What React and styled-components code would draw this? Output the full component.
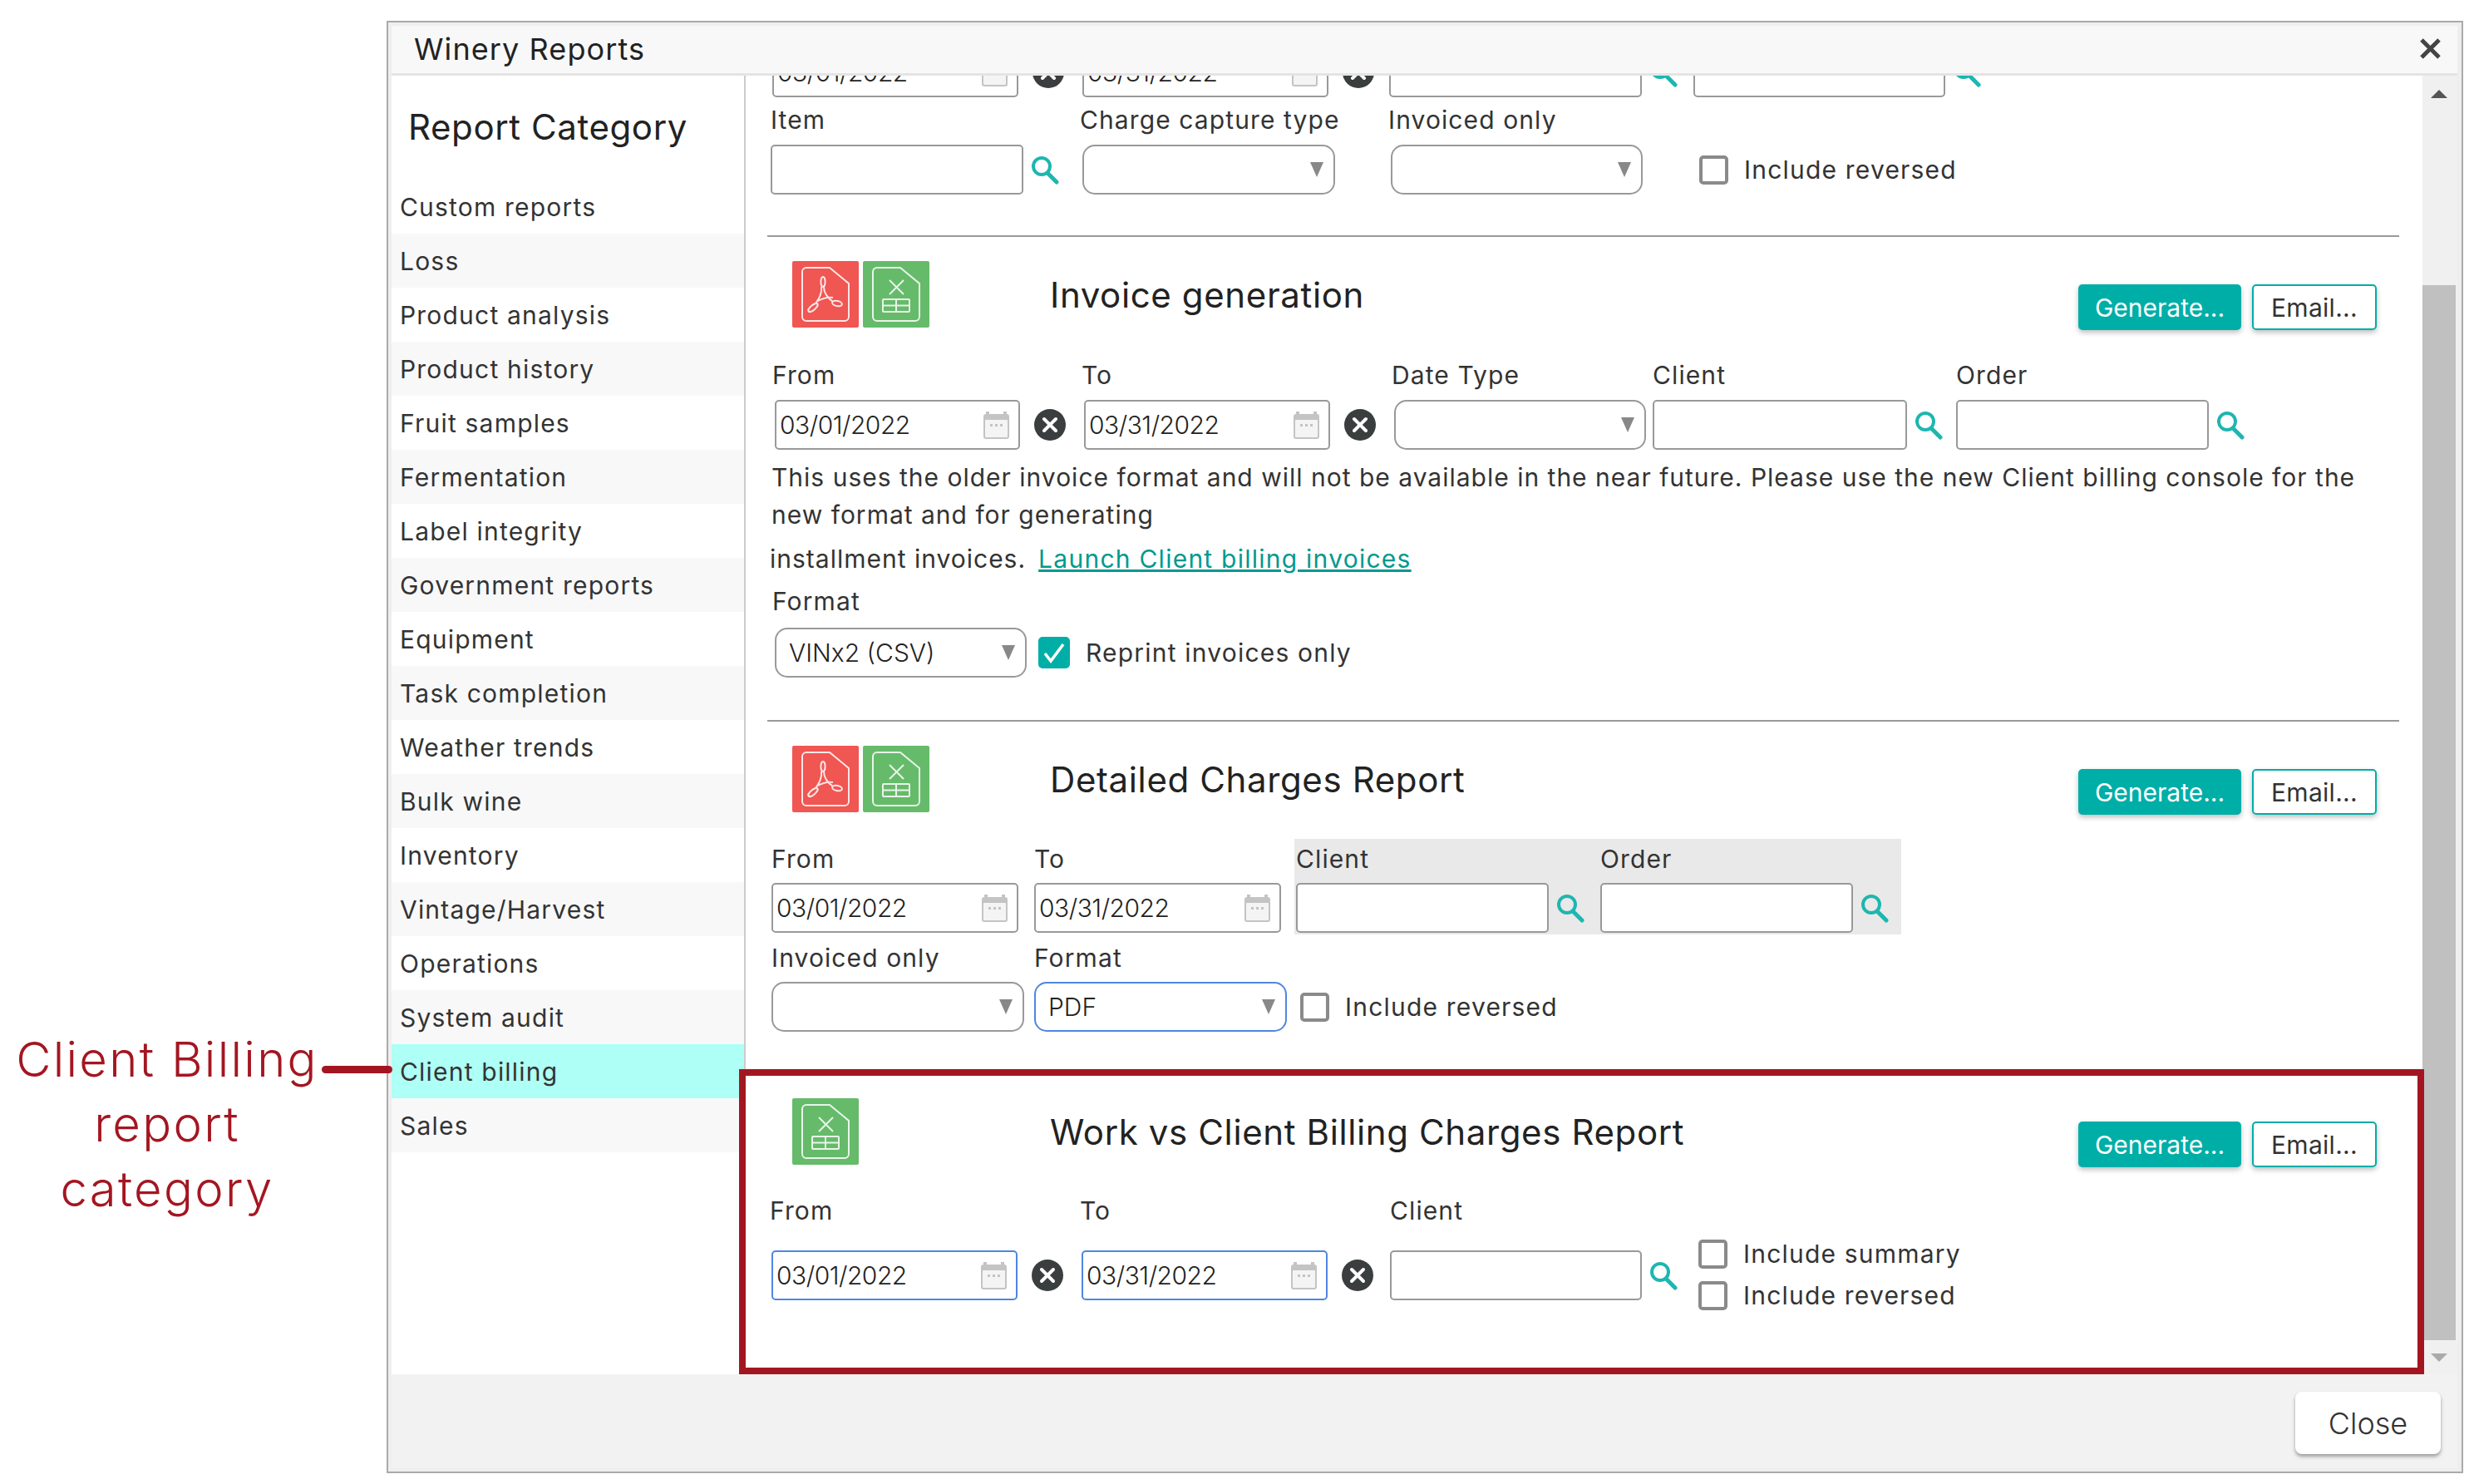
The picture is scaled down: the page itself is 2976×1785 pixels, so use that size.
import React from "react";
import styled, { createGlobalStyle } from "styled-components";

const GlobalStyle = createGlobalStyle`
  html, body { margin: 0; padding: 0; background: #fff; }
  body { font-family: Inter, "Liberation Sans", sans-serif; color: #333; }
`;

const Page = styled.div`
  display: flex;
  width: 2976px;
  height: 1785px;
  overflow: hidden;
  background: #fff;
`;

const CalloutColumn = styled.div`
  width: 465px;
  flex: none;
  position: relative;
  z-index: 2;
`;

const Callout = styled.div`
  position: relative;
  width: 402px;
  margin-top: 1235px;
  text-align: center;
  color: #a31621;
  font-size: 58px;
  line-height: 78px;
  letter-spacing: 2.3px;
  font-weight: 300;
`;

const Connector = styled.div`
  position: absolute;
  left: 387px;
  top: 47px;
  width: 85px;
  height: 9px;
  border-radius: 5px;
  background: #a31621;
`;

const Modal = styled.div`
  width: 2498px;
  height: 1747px;
  margin-top: 25px;
  flex: none;
  box-sizing: border-box;
  display: flex;
  flex-direction: column;
  border: 2px solid #aaa;
  padding: 4px 5px 4px 4px;
  background: #eee;
`;

const Header = styled.div`
  height: 60px;
  flex: none;
  display: flex;
  align-items: center;
  justify-content: space-between;
  box-sizing: border-box;
  padding: 0 20px 2px 27px;
  background: #f8f8f8;
  border-bottom: 3px solid #e4e4e4;
  font-size: 36px;
  letter-spacing: 1.1px;
  color: #222;
`;

const Body = styled.div`
  flex: 1;
  min-height: 0;
  display: flex;
  background: #fff;
`;

const Sidebar = styled.div`
  width: 426px;
  flex: none;
  box-sizing: border-box;
  border-right: 2px solid #ccc;
`;

const SidebarTitle = styled.div`
  height: 125px;
  box-sizing: border-box;
  padding: 37px 0 0 20px;
  font-size: 42px;
  line-height: 50px;
  letter-spacing: 0.6px;
  color: #222;
`;

const CategoryItem = styled.div`
  height: 65px;
  display: flex;
  align-items: center;
  box-sizing: border-box;
  padding-left: 10px;
  font-size: 30px;
  letter-spacing: 1.2px;
  color: #333;
  background: ${(p) => (p.$active ? "#aefff5" : p.$odd ? "#f8f8f8" : "#fff")};
`;

const Content = styled.div`
  flex: 1;
  min-width: 0;
  min-height: 0;
  position: relative;
  z-index: 1;
  padding-top: 1px;
  clip-path: inset(0 -20px -20px -20px);
`;

const Row = styled.div`
  display: flex;
  align-items: flex-start;
  padding-left: ${(p) => p.$left || 0}px;
  margin-top: ${(p) => p.$top || 0}px;
`;

const Field = styled.div`
  width: ${(p) => p.$w}px;
  flex: none;
  padding-top: ${(p) => p.$pad || 0}px;
`;

const ShadedGroup = styled.div`
  display: flex;
  flex: none;
  margin: -6px 0 0 -2px;
  padding: 6px 0 2px 2px;
  background: #e9e9e9;
`;

const Label = styled.div`
  height: 36px;
  line-height: 36px;
  margin-bottom: ${(p) => p.$gap ?? 11}px;
  margin-left: ${(p) => p.$shift || 0}px;
  font-size: 30px;
  letter-spacing: 1.1px;
  color: #333;
  white-space: nowrap;
`;

const ControlLine = styled.div`
  display: flex;
  align-items: center;
`;

const TextBox = styled.div`
  width: ${(p) => p.$w}px;
  height: 60px;
  flex: none;
  box-sizing: border-box;
  display: flex;
  align-items: center;
  justify-content: space-between;
  padding: 0 11px 0 4px;
  background: #fff;
  border: 2px solid ${(p) => (p.$focus ? "#4f86e0" : "#999")};
  border-radius: 5px;
  font-size: 30px;
  letter-spacing: -0.5px;
  font-weight: 300;
  color: #222;
`;

const SelectBox = styled(TextBox)`
  border-radius: 15px;
  padding: 0 12px 0 15px;
  letter-spacing: 0;
`;

const Caret = styled.span`
  margin-left: auto;
  width: 0;
  height: 0;
  border-left: 8.5px solid transparent;
  border-right: 8.5px solid transparent;
  border-top: 18px solid #888;
`;

const CheckRow = styled.div`
  display: flex;
  align-items: center;
  gap: ${(p) => p.$gap ?? 19}px;
  height: ${(p) => p.$h || 60}px;
  font-size: 30px;
  letter-spacing: 1.2px;
  color: #333;
  white-space: nowrap;
`;

const CheckMark = styled.span`
  width: ${(p) => (p.$on ? 38 : 35)}px;
  height: ${(p) => (p.$on ? 38 : 35)}px;
  flex: none;
  box-sizing: border-box;
  display: flex;
  align-items: center;
  justify-content: center;
  border-radius: 5px;
  border: ${(p) => (p.$on ? "3px solid #00aea8" : "4px solid #8a8a8a")};
  background: ${(p) => (p.$on ? "#00aea8" : "#fff")};
`;

const Divider = styled.div`
  height: 2px;
  width: 1963px;
  margin: ${(p) => p.$top}px 0 0 26px;
  background: #999;
`;

const SectionHead = styled.div`
  display: flex;
  align-items: flex-start;
  padding: 0 0 0 56px;
  margin-top: ${(p) => p.$top}px;
  height: 80px;
`;

const ReportIcons = styled.div`
  width: 310px;
  flex: none;
  display: flex;
  gap: 5px;
`;

const ReportTitle = styled.div`
  flex: 1;
  padding-top: 16px;
  font-size: 42px;
  line-height: 50px;
  letter-spacing: 0.62px;
  color: #222;
`;

const Actions = styled.div`
  display: flex;
  gap: 13px;
  margin-top: 28px;
  margin-right: 55px;
`;

const GenerateButton = styled.div`
  width: 196px;
  height: 55px;
  display: flex;
  align-items: center;
  justify-content: center;
  border-radius: 5px;
  background: #00aea8;
  color: #fff;
  font-size: 30px;
  box-shadow: 0 3px 6px rgba(0, 0, 0, 0.25);
`;

const EmailButton = styled(GenerateButton)`
  width: 150px;
  box-sizing: border-box;
  background: #fff;
  color: #333;
  letter-spacing: 0.3px;
  border: 2px solid #00aea8;
`;

const Notice = styled.div`
  margin: 11px 0 0 31px;
  width: 1950px;
  font-size: 30px;
  line-height: 45px;
  letter-spacing: 1px;
  color: #333;
`;

const InstallLine = styled.div`
  margin: 8px 0 0 29px;
  font-size: 30px;
  line-height: 45px;
  letter-spacing: 1px;
  color: #333;
`;

const LaunchLink = styled.a`
  margin-left: 15px;
  color: #00998f;
  letter-spacing: 1.25px;
  text-decoration: underline;
  text-decoration-thickness: 3px;
`;

const HighlightSection = styled.div`
  position: relative;
  height: 367px;
  margin-top: 45px;
  padding-top: 35px;
  box-sizing: border-box;

  &::after {
    content: "";
    position: absolute;
    left: -8px;
    top: 0;
    width: 2027px;
    height: 367px;
    box-sizing: border-box;
    border: 8px solid #a31621;
    pointer-events: none;
  }
`;

const Scrollbar = styled.div`
  width: 42px;
  flex: none;
  box-sizing: border-box;
  padding-right: 2px;
  display: flex;
  flex-direction: column;
  align-items: center;
  background: #f0f0f0;
`;

const ScrollArrow = styled.div`
  height: ${(p) => p.$h}px;
  flex: none;
  display: flex;
  align-items: center;
`;

const ArrowUp = styled.span`
  width: 0;
  height: 0;
  border-left: 10px solid transparent;
  border-right: 10px solid transparent;
  border-bottom: 10px solid #555;
`;

const ArrowDown = styled.span`
  width: 0;
  height: 0;
  border-left: 10px solid transparent;
  border-right: 10px solid transparent;
  border-top: 10px solid #aaa;
`;

const ScrollTrack = styled.div`
  flex: 1;
  width: 100%;
  display: flex;
  flex-direction: column;
`;

const ScrollThumb = styled.div`
  margin-top: 208px;
  height: 1269px;
  background: #c0c0c0;
`;

const Footer = styled.div`
  height: 113px;
  flex: none;
  display: flex;
  justify-content: flex-end;
  align-items: flex-start;
  padding: 21px 20px 0 0;
  box-sizing: border-box;
  background: #f2f2f2;
`;

const CloseButton = styled.div`
  width: 175px;
  height: 75px;
  display: flex;
  align-items: center;
  justify-content: center;
  border-radius: 8px;
  background: #fff;
  font-size: 36px;
  font-weight: 300;
  color: #333;
  box-shadow: 0 3px 4px rgba(0, 0, 0, 0.35);
`;

const categories = [
  "Custom reports",
  "Loss",
  "Product analysis",
  "Product history",
  "Fruit samples",
  "Fermentation",
  "Label integrity",
  "Government reports",
  "Equipment",
  "Task completion",
  "Weather trends",
  "Bulk wine",
  "Inventory",
  "Vintage/Harvest",
  "Operations",
  "System audit",
  "Client billing",
  "Sales",
];

function FileOutline() {
  return <path d="M17 8H45L68 27V67a5 5 0 0 1-5 5H17a5 5 0 0 1-5-5V13a5 5 0 0 1 5-5Z" />;
}

function PdfIcon() {
  return (
    <svg width="80" height="80" viewBox="0 0 80 80">
      <rect width="80" height="80" rx="2" fill="#f05652" />
      <g fill="none" stroke="#fff" strokeWidth="2" opacity="0.85">
        <FileOutline />
        <ellipse cx="37" cy="25" rx="2.6" ry="6" />
        <ellipse cx="25" cy="56" rx="7" ry="2.8" transform="rotate(-40 25 56)" />
        <ellipse cx="54" cy="51" rx="6" ry="3" transform="rotate(12 54 51)" />
        <path d="M38 31c0 6 4 13 11 18M35 31c1 9-3 15-7 20M29 49c7-4 13-6 20-5" />
      </g>
    </svg>
  );
}

function ExcelIcon() {
  return (
    <svg width="80" height="80" viewBox="0 0 80 80">
      <rect width="80" height="80" rx="2" fill="#66bb6a" />
      <g fill="none" stroke="#fff" strokeWidth="2" opacity="0.85">
        <FileOutline />
        <path d="M32 23L49 40M49 23L32 40" />
        <rect x="24" y="46" width="32" height="15" rx="1" />
        <path d="M24 53.5H56M40 46V61" />
      </g>
    </svg>
  );
}

const SearchGlyph = styled.svg`
  flex: none;
  margin-left: 9px;
`;

function SearchIcon() {
  return (
    <SearchGlyph width="34" height="36" viewBox="0 0 34 36">
      <circle cx="13" cy="14" r="10" fill="none" stroke="#1eb6b0" strokeWidth="4" />
      <path d="M20 22L31 33" stroke="#1eb6b0" strokeWidth="5" strokeLinecap="round" />
    </SearchGlyph>
  );
}

const CalendarGlyph = styled.svg`
  flex: none;
`;

function CalendarIcon() {
  return (
    <CalendarGlyph width="31" height="33" viewBox="0 0 31 33">
      <rect x="0" y="3" width="31" height="30" rx="3" fill="#c4c4c4" />
      <rect x="3" y="0" width="4" height="6" fill="#c4c4c4" />
      <rect x="24" y="0" width="4" height="6" fill="#c4c4c4" />
      <rect x="2" y="10" width="27" height="21" rx="1" fill="#f4f4f4" />
      <path d="M8 15h3v3H8zM14 15h3v3h-3zM20 15h3v3h-3z" fill="#c4c4c4" />
    </CalendarGlyph>
  );
}

const ClearGlyph = styled.svg`
  flex: none;
  margin-left: 17px;
`;

function ClearIcon() {
  return (
    <ClearGlyph width="38" height="38" viewBox="0 0 38 38">
      <circle cx="19" cy="19" r="19" fill="#3b3e3e" />
      <path d="M12 12L26 26M26 12L12 26" stroke="#fff" strokeWidth="4" strokeLinecap="round" />
    </ClearGlyph>
  );
}

function TickIcon() {
  return (
    <svg width="28" height="26" viewBox="0 0 28 26">
      <path d="M3 14l7 9L25 3" fill="none" stroke="#fff" strokeWidth="3.5" />
    </svg>
  );
}

function DateField({ label, value, w, box = 296, focus, clear = true, gap, shift }) {
  return (
    <Field $w={w}>
      {label && (
        <Label $gap={gap} $shift={shift}>
          {label}
        </Label>
      )}
      <ControlLine>
        <TextBox $w={box} $focus={focus}>
          {value}
          <CalendarIcon />
        </TextBox>
        {clear && <ClearIcon />}
      </ControlLine>
    </Field>
  );
}

function LookupField({ label, w, box = 306, gap }) {
  return (
    <Field $w={w}>
      {label && <Label $gap={gap}>{label}</Label>}
      <ControlLine>
        <TextBox $w={box} />
        <SearchIcon />
      </ControlLine>
    </Field>
  );
}

function SelectField({ label, value, w, box = 304, focus, gap, shift }) {
  return (
    <Field $w={w}>
      {label && (
        <Label $gap={gap} $shift={shift}>
          {label}
        </Label>
      )}
      <SelectBox $w={box} $focus={focus}>
        {value}
        <Caret />
      </SelectBox>
    </Field>
  );
}

export default function App() {
  return (
    <Page>
      <GlobalStyle />
      <CalloutColumn>
        <Callout>
          Client Billing
          <br />
          report
          <br />
          category
          <Connector />
        </Callout>
      </CalloutColumn>
      <Modal>
        <Header>
          Winery Reports
          <svg width="25" height="25" viewBox="0 0 25 25">
            <path d="M2 2L23 23M23 2L2 23" stroke="#444" strokeWidth="5" />
          </svg>
        </Header>
        <Body>
          <Sidebar>
            <SidebarTitle>Report Category</SidebarTitle>
            {categories.map((c, i) => (
              <CategoryItem key={c} $odd={i % 2 === 1} $active={c === "Client billing"}>
                {c}
              </CategoryItem>
            ))}
          </Sidebar>
          <Content>
            <Row $left={32} $top={-35}>
              <DateField value="03/01/2022" w={373} />
              <DateField value="03/31/2022" w={369} />
              <LookupField w={366} box={304} />
              <LookupField w={370} box={303} />
            </Row>
            <Row $left={30} $top={9}>
              <LookupField label="Item" w={375} box={304} gap={12} />
              <SelectField label="Charge capture type" w={371} shift={-3} gap={12} />
              <SelectField label="Invoiced only" w={371} box={303} shift={-3} gap={12} />
              <Field $w={400}>
                <Label $gap={12} />
                <CheckRow>
                  <CheckMark />
                  Include reversed
                </CheckRow>
              </Field>
            </Row>
            <Divider $top={49} />
            <SectionHead $top={29}>
              <ReportIcons>
                <PdfIcon />
                <ExcelIcon />
              </ReportIcons>
              <ReportTitle>Invoice generation</ReportTitle>
              <Actions>
                <GenerateButton>Generate...</GenerateButton>
                <EmailButton>Email...</EmailButton>
              </Actions>
            </SectionHead>
            <Row $left={35} $top={39}>
              <DateField label="From" value="03/01/2022" w={372} box={295} gap={12} shift={-3} />
              <DateField label="To" value="03/31/2022" w={373} gap={12} shift={-3} />
              <SelectField label="Date Type" w={311} box={303} gap={12} shift={-3} />
              <LookupField label="Client" w={365} gap={12} />
              <LookupField label="Order" w={360} box={304} gap={12} />
            </Row>
            <Notice>
              This uses the older invoice format and will not be available in the near future. Please use the new
              Client billing console for the new format and for generating
            </Notice>
            <InstallLine>
              installment invoices.
              <LaunchLink>Launch Client billing invoices</LaunchLink>
            </InstallLine>
            <Row $left={35} $top={10}>
              <SelectField label="Format" value="VINx2 (CSV)" w={317} box={303} gap={14} shift={-3} />
              <Field $w={500}>
                <Label $gap={14} />
                <CheckRow>
                  <CheckMark $on>
                    <TickIcon />
                  </CheckMark>
                  Reprint invoices only
                </CheckRow>
              </Field>
            </Row>
            <Divider $top={51} />
            <SectionHead $top={29}>
              <ReportIcons>
                <PdfIcon />
                <ExcelIcon />
              </ReportIcons>
              <ReportTitle>Detailed Charges Report</ReportTitle>
              <Actions>
                <GenerateButton>Generate...</GenerateButton>
                <EmailButton>Email...</EmailButton>
              </Actions>
            </SectionHead>
            <Row $left={31} $top={38}>
              <DateField label="From" value="03/01/2022" w={316} box={297} clear={false} />
              <DateField label="To" value="03/31/2022" w={315} box={297} clear={false} />
              <ShadedGroup>
                <LookupField label="Client" w={366} box={304} />
                <LookupField label="Order" w={362} box={304} />
              </ShadedGroup>
            </Row>
            <Row $left={31} $top={10}>
              <SelectField label="Invoiced only" w={316} />
              <SelectField label="Format" value="PDF" w={320} focus />
              <Field $w={400}>
                <Label />
                <CheckRow>
                  <CheckMark />
                  Include reversed
                </CheckRow>
              </Field>
            </Row>
            <HighlightSection>
              <SectionHead $top={0}>
                <ReportIcons>
                  <ExcelIcon />
                </ReportIcons>
                <ReportTitle>Work vs Client Billing Charges Report</ReportTitle>
                <Actions>
                  <GenerateButton>Generate...</GenerateButton>
                  <EmailButton>Email...</EmailButton>
                </Actions>
              </SectionHead>
              <Row $left={31} $top={37}>
                <DateField label="From" value="03/01/2022" w={373} focus gap={30} shift={-2} />
                <DateField label="To" value="03/31/2022" w={371} focus gap={30} shift={-2} />
                <LookupField label="Client" w={371} box={303} gap={30} />
                <Field $w={400} $pad={45}>
                  <CheckRow $h={50}>
                    <CheckMark />
                    Include summary
                  </CheckRow>
                  <CheckRow $h={50}>
                    <CheckMark />
                    Include reversed
                  </CheckRow>
                </Field>
              </Row>
            </HighlightSection>
          </Content>
          <Scrollbar>
            <ScrollArrow $h={44}>
              <ArrowUp />
            </ScrollArrow>
            <ScrollTrack>
              <ScrollThumb />
            </ScrollTrack>
            <ScrollArrow $h={41}>
              <ArrowDown />
            </ScrollArrow>
          </Scrollbar>
        </Body>
        <Footer>
          <CloseButton>Close</CloseButton>
        </Footer>
      </Modal>
    </Page>
  );
}
